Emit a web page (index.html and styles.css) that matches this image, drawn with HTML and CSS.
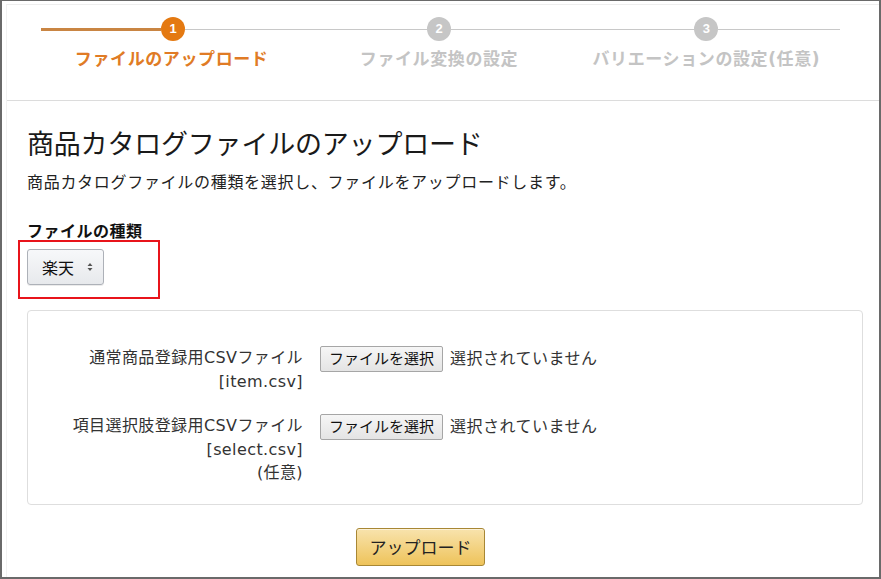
FILE: index.html
```html
<!DOCTYPE html>
<html lang="ja">
<head>
<meta charset="utf-8">
<title>商品カタログファイルのアップロード</title>
<link rel="stylesheet" href="styles.css">
</head>
<body>
<div class="frame">
  <div class="inner">
    <header class="header">
      <ol class="stepper">
        <li class="step done">
          <div class="track"><span class="bar left"></span><span class="dot">1</span><span class="bar right"></span></div>
          <div class="step-label">ファイルのアップロード</div>
        </li>
        <li class="step">
          <div class="track"><span class="bar left"></span><span class="dot">2</span><span class="bar right"></span></div>
          <div class="step-label">ファイル変換の設定</div>
        </li>
        <li class="step">
          <div class="track"><span class="bar left"></span><span class="dot">3</span><span class="bar right"></span></div>
          <div class="step-label">バリエーションの設定(任意)</div>
        </li>
      </ol>
    </header>

    <main class="content">
      <h1 class="title">商品カタログファイルのアップロード</h1>
      <p class="lead">商品カタログファイルの種類を選択し、ファイルをアップロードします。</p>

      <div class="type-field">
        <div class="field-label">ファイルの種類</div>
        <div class="select-wrap">
          <button class="select" type="button">楽天
            <svg class="updown" width="6" height="10" viewBox="0 0 6 10"><path d="M3 1 L5.5 4 H0.5 Z M3 9 L5.5 6 H0.5 Z" fill="#555"/></svg>
          </button>
          <span class="highlight"></span>
        </div>
      </div>

      <section class="panel">
        <div class="row">
          <div class="row-label">通常商品登録用CSVファイル<br>[item.csv]</div>
          <div class="file-input"><button class="file-btn" type="button">ファイルを選択</button><span class="file-status">選択されていません</span></div>
        </div>
        <div class="row">
          <div class="row-label">項目選択肢登録用CSVファイル<br>[select.csv]<br>(任意)</div>
          <div class="file-input"><button class="file-btn" type="button">ファイルを選択</button><span class="file-status">選択されていません</span></div>
        </div>
      </section>

      <div class="actions">
        <button class="upload" type="button">アップロード</button>
      </div>
    </main>
  </div>
</div>
</body>
</html>
```

FILE: styles.css
```css
* { box-sizing: border-box; }
html, body { margin: 0; padding: 0; background: #fff; }
body {
  font-family: "DejaVu Sans", "Noto Sans CJK JP", sans-serif;
  color: #333;
}
.frame {
  width: 881px;
  height: 579px;
  border: 2px solid #6a6a6a;
  border-top-width: 1px;
  background: #fff;
  padding: 3px 0 0 4px;
  overflow: hidden;
}
.inner {
  height: 100%;
  border-top: 1px solid #eeeeee;
  border-left: 1px solid #f2f2f2;
}
.header {
  border-bottom: 1px solid #dcdcdc;
  padding: 12px 0 30px 0;
}
.stepper {
  list-style: none;
  margin: 0 0 0 31px;
  padding: 0;
  width: 802px;
  display: grid;
  grid-template-columns: repeat(3, 1fr);
}
.step { display: flex; flex-direction: column; align-items: center; }
.track {
  width: 100%;
  height: 24px;
  display: flex;
  align-items: center;
}
.bar { flex: 1; height: 1px; background: #c8c8c8; }
.step:first-child .bar.left { margin-left: 3px; }
.step.done .bar.left { height: 3px; background: #c98543; }
.dot {
  width: 24px;
  height: 24px;
  border-radius: 50%;
  background: #c6c6c6;
  color: #fff;
  font-size: 13px;
  font-weight: 700;
  line-height: 24px;
  text-align: center;
  font-family: "Liberation Sans", "Noto Sans", sans-serif;
}
.step.done .dot { background: #e47911; }
.step-label {
  margin-top: 8px;
  font-size: 17px;
  font-weight: 700;
  line-height: 21px;
  color: #c4c4c4;
  white-space: nowrap;
  letter-spacing: 0.6px;
}
.step.done .step-label { color: #e07b25; }

.content { padding: 26px 16px 0 20px; }
.title {
  margin: 0;
  font-size: 27px;
  font-weight: 400;
  line-height: 36px;
  color: #1a1a1a;
  letter-spacing: -0.2px;
}
.lead {
  margin: 9px 0 0 0;
  font-size: 16px;
  line-height: 22px;
  color: #222;
  letter-spacing: 0.7px;
}
.type-field { margin-top: 27px; }
.field-label {
  font-size: 16px;
  font-weight: 700;
  line-height: 22px;
  color: #111;
  letter-spacing: 0.5px;
}
.select-wrap {
  position: relative;
  margin-top: 6px;
  height: 36px;
}
.select {
  width: 77px;
  height: 36px;
  border: 1px solid #adb1b8;
  border-radius: 3px;
  background: linear-gradient(#f7f8fa, #e7e9ec);
  box-shadow: 0 1px 0 rgba(0,0,0,0.08);
  font-family: inherit;
  font-size: 16px;
  color: #111;
  padding: 0 0 0 14px;
  display: flex;
  align-items: center;
  gap: 13px;
}
.updown { display: block; }
.highlight {
  position: absolute;
  left: -9px;
  top: -9px;
  width: 142px;
  height: 59px;
  border: 2px solid #e8141b;
  pointer-events: none;
}
.panel {
  margin-top: 25px;
  border: 1px solid #dedede;
  border-radius: 4px;
  padding: 35px 0 19px 0;
  display: flex;
  flex-direction: column;
  gap: 21px;
}
.row {
  display: grid;
  grid-template-columns: 275px 1fr;
  column-gap: 17px;
  align-items: start;
}
.row-label {
  text-align: right;
  font-size: 16px;
  line-height: 23.5px;
  color: #333;
  letter-spacing: 0.4px;
}
.file-input {
  display: flex;
  align-items: center;
  gap: 7px;
}
.file-btn {
  width: 123px;
  height: 26px;
  border: 1px solid #a6a6a6;
  border-radius: 2px;
  background: linear-gradient(#f6f6f6, #e4e4e4);
  font-family: inherit;
  font-size: 15px;
  color: #111;
  padding: 0;
  line-height: 24px;
}
.file-status {
  font-size: 16px;
  line-height: 22px;
  color: #333;
  letter-spacing: 0.5px;
}
.actions {
  margin-top: 23px;
  padding-left: 329px;
}
.upload {
  width: 129px;
  height: 38px;
  border: 1px solid #a88734;
  border-radius: 3px;
  background: linear-gradient(#f8e3ad, #eec35a);
  box-shadow: inset 0 1px 0 rgba(255,255,255,0.5);
  font-family: inherit;
  font-size: 17px;
  color: #222;
  padding: 0;
}
```
